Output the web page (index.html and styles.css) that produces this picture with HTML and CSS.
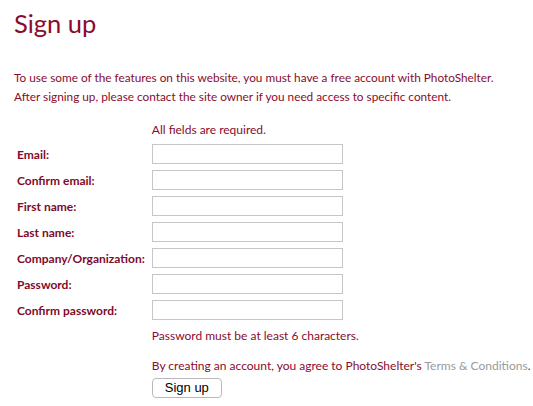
FILE: index.html
```html
<!DOCTYPE html>
<html>
<head>
<meta charset="utf-8">
<link rel="stylesheet" href="styles.css">
</head>
<body>
<div class="page">
  <h1 class="title">Sign up</h1>
  <p class="intro">To use some of the features on this website, you must have a free account with PhotoShelter.<br>After signing up, please contact the site owner if you need access to specific content.</p>
  <div class="form">
    <div class="label"></div>
    <div class="note">All fields are required.</div>
    <label class="label">Email:</label><input class="field" type="text">
    <label class="label">Confirm email:</label><input class="field" type="text">
    <label class="label">First name:</label><input class="field" type="text">
    <label class="label">Last name:</label><input class="field" type="text">
    <label class="label">Company/Organization:</label><input class="field" type="text">
    <label class="label">Password:</label><input class="field" type="password">
    <label class="label">Confirm password:</label><input class="field" type="password">
    <div class="label"></div>
    <div class="note pw">Password must be at least 6 characters.</div>
    <div class="label"></div>
    <div class="note terms">By creating an account, you agree to PhotoShelter's <a class="link" href="#">Terms &amp; Conditions</a>.</div>
    <div class="label"></div>
    <div class="actions"><button class="btn" type="button">Sign up</button></div>
  </div>
</div>
</body>
</html>
```
FILE: styles.css
```css
html, body {
  margin: 0;
  padding: 0;
  background: #fff;
}
body {
  font-family: Lato, "Open Sans", sans-serif;
  color: #8a0b2d;
}
.page {
  padding: 0 0 0 14px;
}
.title {
  font-size: 25.5px;
  font-weight: 400;
  margin: 0;
  padding-top: 7px;
  line-height: 32px;
}
.intro {
  font-size: 11.8px;
  line-height: 19px;
  margin: 29px 0 0 0;
}
.form {
  display: grid;
  grid-template-columns: auto 1fr;
  column-gap: 7px;
  row-gap: 6px;
  margin-top: 16px;
  align-items: center;
}
.label {
  font-size: 12px;
  font-weight: 700;
  padding-left: 3px;
  color: #7e0a29;
}
.note {
  font-size: 12px;
  line-height: 16px;
}
.field {
  box-sizing: border-box;
  width: 191px;
  height: 20px;
  margin: 0;
  border: 1px solid #c6c6c6;
  padding: 2px 4px;
  font-size: 12px;
}
.pw {
  margin-top: 2px;
}
.terms {
  margin-top: 8px;
}
.link {
  color: #9a9a9a;
  text-decoration: none;
}
.actions {
  margin-top: -4px;
}
.btn {
  font-family: "Liberation Sans", Arial, sans-serif;
  font-size: 13px;
  width: 70px;
  height: 20px;
  padding: 0;
  background: #fff;
  border: 1px solid #b8b8b8;
  border-radius: 4px;
  color: #000;
}
```
